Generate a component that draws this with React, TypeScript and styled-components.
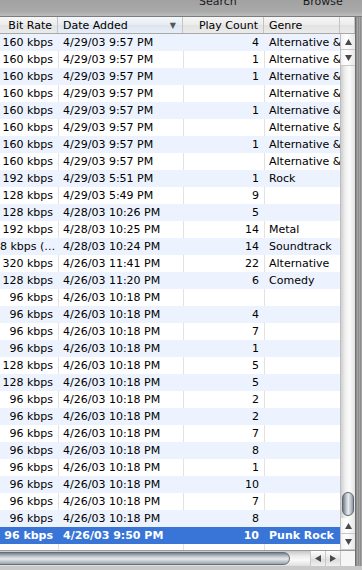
import styled, { createGlobalStyle } from "styled-components";

const GlobalStyle = createGlobalStyle`
    html, body {
        margin: 0;
        padding: 0;
        background: #a9a9a9;
    }
    * {
        box-sizing: border-box;
    }
`;

type Track = { rate: string; date: string; plays: string; genre: string };

const tracks: Track[] = [
    { rate: "160 kbps", date: "4/29/03 9:57 PM", plays: "4", genre: "Alternative &" },
    { rate: "160 kbps", date: "4/29/03 9:57 PM", plays: "1", genre: "Alternative &" },
    { rate: "160 kbps", date: "4/29/03 9:57 PM", plays: "1", genre: "Alternative &" },
    { rate: "160 kbps", date: "4/29/03 9:57 PM", plays: "", genre: "Alternative &" },
    { rate: "160 kbps", date: "4/29/03 9:57 PM", plays: "1", genre: "Alternative &" },
    { rate: "160 kbps", date: "4/29/03 9:57 PM", plays: "", genre: "Alternative &" },
    { rate: "160 kbps", date: "4/29/03 9:57 PM", plays: "1", genre: "Alternative &" },
    { rate: "160 kbps", date: "4/29/03 9:57 PM", plays: "", genre: "Alternative &" },
    { rate: "192 kbps", date: "4/29/03 5:51 PM", plays: "1", genre: "Rock" },
    { rate: "128 kbps", date: "4/29/03 5:49 PM", plays: "9", genre: "" },
    { rate: "128 kbps", date: "4/28/03 10:26 PM", plays: "5", genre: "" },
    { rate: "192 kbps", date: "4/28/03 10:25 PM", plays: "14", genre: "Metal" },
    { rate: "8 kbps (…", date: "4/28/03 10:24 PM", plays: "14", genre: "Soundtrack" },
    { rate: "320 kbps", date: "4/26/03 11:41 PM", plays: "22", genre: "Alternative" },
    { rate: "128 kbps", date: "4/26/03 11:20 PM", plays: "6", genre: "Comedy" },
    { rate: "96 kbps", date: "4/26/03 10:18 PM", plays: "", genre: "" },
    { rate: "96 kbps", date: "4/26/03 10:18 PM", plays: "4", genre: "" },
    { rate: "96 kbps", date: "4/26/03 10:18 PM", plays: "7", genre: "" },
    { rate: "96 kbps", date: "4/26/03 10:18 PM", plays: "1", genre: "" },
    { rate: "128 kbps", date: "4/26/03 10:18 PM", plays: "5", genre: "" },
    { rate: "128 kbps", date: "4/26/03 10:18 PM", plays: "5", genre: "" },
    { rate: "96 kbps", date: "4/26/03 10:18 PM", plays: "2", genre: "" },
    { rate: "96 kbps", date: "4/26/03 10:18 PM", plays: "2", genre: "" },
    { rate: "96 kbps", date: "4/26/03 10:18 PM", plays: "7", genre: "" },
    { rate: "96 kbps", date: "4/26/03 10:18 PM", plays: "8", genre: "" },
    { rate: "96 kbps", date: "4/26/03 10:18 PM", plays: "1", genre: "" },
    { rate: "96 kbps", date: "4/26/03 10:18 PM", plays: "10", genre: "" },
    { rate: "96 kbps", date: "4/26/03 10:18 PM", plays: "7", genre: "" },
    { rate: "96 kbps", date: "4/26/03 10:18 PM", plays: "8", genre: "" },
    { rate: "96 kbps", date: "4/26/03 9:50 PM", plays: "10", genre: "Punk Rock" },
];

const SELECTED = tracks.length - 1;
const COLS = "58px 125px 81px 76px";

const Window = styled.div`
    width: 362px;
    height: 570px;
    overflow: hidden;
    font-family: "DejaVu Sans", "Liberation Sans", sans-serif;
    font-size: 11px;
    color: #000;
    background: #c4c4c4;
`;

const TopBar = styled.div`
    height: 17px;
    overflow: hidden;
    display: flex;
    background: linear-gradient(#a2a2a2, #a9a9a9 70%, #bcbcbc);
    border-bottom: 1px solid #7c7c7c;
`;

const BarLabel = styled.span<{ $left: number }>`
    margin-left: ${(p) => p.$left}px;
    margin-top: -5px;
    font-size: 11px;
    color: #1a1a1a;
    line-height: 14px;
`;

const Main = styled.div`
    height: 549px;
    display: grid;
    grid-template-columns: 355px 7px;
`;

const Frame = styled.div`
    background: repeating-linear-gradient(to right, #8e8e8e 0 1px, #a4a4a4 1px 2px);
    border-left: 1px solid #6f6f6f;
`;

const Pane = styled.div`
    display: grid;
    grid-template-rows: 17px 516px 16px;
    background: #fff;
`;

const HeaderRow = styled.div`
    display: grid;
    grid-template-columns: ${COLS} 1fr;
    border-bottom: 1px solid #a8a8a8;
`;

const HeaderCell = styled.div<{ $align?: string; $sorted?: boolean }>`
    display: flex;
    align-items: center;
    justify-content: ${(p) => (p.$align === "right" ? "flex-end" : "flex-start")};
    padding: 0 5px;
    border-right: 1px solid #c4c4c4;
    white-space: nowrap;
    overflow: hidden;
    background: ${(p) =>
        p.$sorted
            ? "linear-gradient(#f4f7fb, #e6ecf4 50%, #dce4ee 51%, #e8eef6)"
            : "linear-gradient(#f6f6f6, #ececec 50%, #e2e2e2 51%, #ebebeb)"};
`;

const SortArrow = styled.span`
    margin-left: auto;
    font-size: 8px;
    color: #555;
    padding-right: 1px;
`;

const Body = styled.div`
    display: grid;
    grid-template-columns: 340px 15px;
    overflow: hidden;
`;

const List = styled.div`
    background: linear-gradient(to right,
        transparent 58px, #e2e2e2 58px, #e2e2e2 59px, transparent 59px,
        transparent 183px, #e2e2e2 183px, #e2e2e2 184px, transparent 184px,
        transparent 264px, #e2e2e2 264px, #e2e2e2 265px, transparent 265px);
`;

const Row = styled.div<{ $odd: boolean; $selected: boolean }>`
    height: 17px;
    display: grid;
    grid-template-columns: ${COLS};
    align-items: center;
    background: ${(p) => (p.$selected ? "#3875d7" : p.$odd ? "#edf3fe" : "transparent")};
    color: ${(p) => (p.$selected ? "#fff" : "#000")};
    font-weight: ${(p) => (p.$selected ? 600 : 400)};
`;

const Cell = styled.div<{ $align?: string }>`
    text-align: ${(p) => p.$align || "left"};
    padding: ${(p) => (p.$align === "right" ? "0 5px 0 0" : "0 0 0 5px")};
    white-space: nowrap;
    overflow: hidden;
`;

const VScroll = styled.div`
    display: grid;
    grid-template-rows: 16px 16px 1fr 16px 16px;
    border-left: 1px solid #bdbdbd;
    background: linear-gradient(to right, #cfcfcf, #efefef 30%, #fbfbfb 60%, #e4e4e4);
`;

const ArrowBtn = styled.div<{ $h?: boolean }>`
    display: flex;
    align-items: center;
    justify-content: center;
    background: ${(p) =>
        p.$h
            ? "linear-gradient(#fdfdfd, #e6e6e6 50%, #dadada 51%, #f0f0f0)"
            : "linear-gradient(to right, #f2f2f2, #fff 40%, #e6e6e6)"};
    border-${(p) => (p.$h ? "left" : "bottom")}: 1px solid #c8c8c8;
`;

const ScrollTrack = styled.div`
    display: flex;
    flex-direction: column;
    justify-content: flex-end;
    padding: 6px 1px 2px;
`;

const VThumb = styled.div`
    height: 24px;
    border-radius: 7px;
    border: 1px solid #5d6670;
    background: linear-gradient(to right, #6f7a86, #c6ccd3 35%, #e8ebee 55%, #8f99a4);
`;

const Corner = styled.div`
    background: #f6f6f6;
    border-left: 1px solid #c8c8c8;
`;

const HScroll = styled.div`
    display: grid;
    grid-template-columns: 1fr 15px 15px 15px;
    border-top: 1px solid #9c9c9c;
    background: linear-gradient(#c6c6c6, #ededed 35%, #fafafa 60%, #dedede);
`;

const HTrack = styled.div`
    display: flex;
    align-items: center;
    padding-right: 10px;
`;

const HThumb = styled.div`
    width: 290px;
    height: 13px;
    border-radius: 0 7px 7px 0;
    border: 1px solid #666e77;
    border-left: none;
    background: linear-gradient(#76808b, #c9ced4 35%, #e6e9ec 55%, #9aa2ab);
`;

const Bottom = styled.div`
    height: 4px;
    background: #c9c9c9;
`;

function Tri({ dir }: { dir: "up" | "down" | "left" | "right" }) {
    const pts = {
        up: "0,6 3.5,0 7,6",
        down: "0,0 7,0 3.5,6",
        left: "6,0 6,7 0,3.5",
        right: "0,0 0,7 6,3.5",
    }[dir];
    const horiz = dir === "left" || dir === "right";
    return (
        <svg width={horiz ? 6 : 7} height={horiz ? 7 : 6} viewBox={horiz ? "0 0 6 7" : "0 0 7 6"}>
            <polygon points={pts} fill="#4a4a4a" />
        </svg>
    );
}

export default function App() {
    return (
        <>
            <GlobalStyle />
            <Window>
                <TopBar>
                    <BarLabel $left={199}>Search</BarLabel>
                    <BarLabel $left={66}>Browse</BarLabel>
                </TopBar>
                <Main>
                    <Pane>
                        <HeaderRow>
                            <HeaderCell $align="right">Bit Rate</HeaderCell>
                            <HeaderCell $sorted>
                                Date Added
                                <SortArrow>▼</SortArrow>
                            </HeaderCell>
                            <HeaderCell $align="right">Play Count</HeaderCell>
                            <HeaderCell>Genre</HeaderCell>
                            <HeaderCell />
                        </HeaderRow>
                        <Body>
                            <List>
                                {tracks.map((t, i) => (
                                    <Row key={i} $odd={i % 2 === 0} $selected={i === SELECTED}>
                                        <Cell $align="right">{t.rate}</Cell>
                                        <Cell>{t.date}</Cell>
                                        <Cell $align="right">{t.plays}</Cell>
                                        <Cell>{t.genre}</Cell>
                                    </Row>
                                ))}
                            </List>
                            <VScroll>
                                <ArrowBtn><Tri dir="up" /></ArrowBtn>
                                <ArrowBtn><Tri dir="down" /></ArrowBtn>
                                <ScrollTrack>
                                    <VThumb />
                                </ScrollTrack>
                                <ArrowBtn><Tri dir="up" /></ArrowBtn>
                                <ArrowBtn><Tri dir="down" /></ArrowBtn>
                            </VScroll>
                        </Body>
                        <HScroll>
                            <HTrack>
                                <HThumb />
                            </HTrack>
                            <ArrowBtn $h><Tri dir="left" /></ArrowBtn>
                            <ArrowBtn $h><Tri dir="right" /></ArrowBtn>
                            <Corner />
                        </HScroll>
                    </Pane>
                    <Frame />
                </Main>
                <Bottom />
            </Window>
        </>
    );
}
